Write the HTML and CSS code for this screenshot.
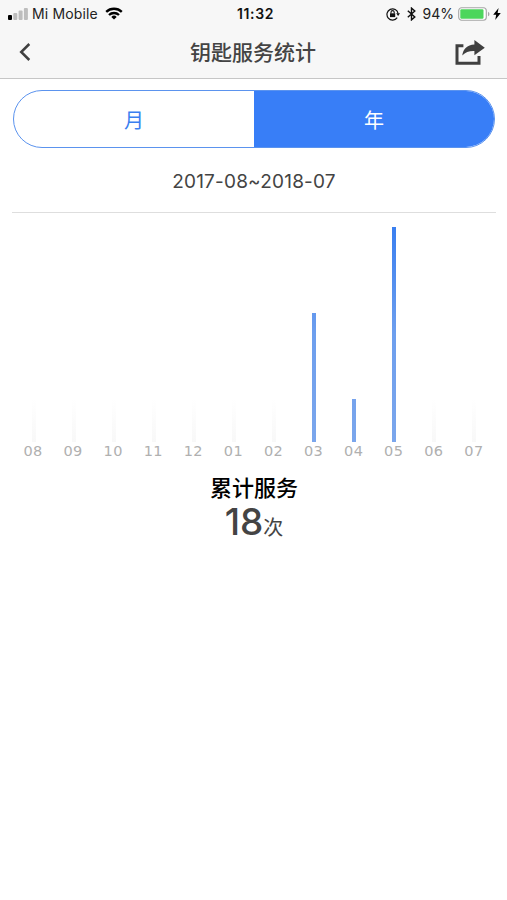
FILE: index.html
```
<!DOCTYPE html>
<html lang="zh-CN">
<head>
    <meta charset="UTF-8">
    <meta name="viewport" content="width=device-width, initial-scale=1.0">
    <title>钥匙服务统计</title>
    <link rel="stylesheet" href="styles.css">
</head>
<body>
    <header class="header">
        <div class="status">
            <div class="status-left">
                <svg class="signal" width="20" height="12" viewBox="0 0 20 12">
                    <rect x="0" y="7" width="4" height="5" rx="1" fill="#000"/>
                    <rect x="5.3" y="5" width="4" height="7" rx="1" fill="#bdbdbd"/>
                    <rect x="10.6" y="2.5" width="4" height="9.5" rx="1" fill="#bdbdbd"/>
                    <rect x="15.9" y="0" width="4" height="12" rx="1" fill="#bdbdbd"/>
                </svg>
                <span class="carrier">Mi Mobile</span>
                <svg class="wifi" width="18" height="13" viewBox="0 0 18 13" fill="none" stroke="#000" stroke-width="2.3">
                    <path d="M1.2 4.9a11.2 11.2 0 0 1 15.6 0"/>
                    <path d="M4 8a7.2 7.2 0 0 1 10 0"/>
                    <path d="M9 12.6L6.3 9.9a3.9 3.9 0 0 1 5.4 0z" fill="#000" stroke="none"/>
                </svg>
            </div>
            <span class="clock">11:32</span>
            <div class="status-right">
                <svg class="lock" width="14" height="14" viewBox="0 0 14 14" fill="none" stroke="#111">
                    <path d="M11.2 10.6A5.6 5.6 0 1 1 12.1 6.6" stroke-width="1.2"/>
                    <path d="M10.2 6.3h3.8l-1.9 2.6z" fill="#111" stroke="none"/>
                    <rect x="4" y="6.3" width="5.2" height="3.8" fill="#111" stroke="none"/>
                    <path d="M5 6.5V5.2a1.6 1.6 0 0 1 3.2 0v1.3" stroke-width="1.1"/>
                </svg>
                <svg class="bluetooth" width="9" height="14" viewBox="0 0 9 14" fill="none" stroke="#111" stroke-width="1.4">
                    <path d="M.8 3.8l7 6.3-3.3 2.8V1.1l3.3 2.8-7 6.3"/>
                </svg>
                <span class="percent">94%</span>
                <svg class="battery" width="33" height="14" viewBox="0 0 33 14">
                    <rect x=".7" y=".7" width="27.6" height="12.6" rx="3" fill="#fff" stroke="#a5a5a5" stroke-width="1.1"/>
                    <rect x="2.3" y="2.3" width="23.2" height="9.4" rx="1.2" fill="#4cd65c"/>
                    <path d="M30 4.7a2.5 2.5 0 0 1 0 4.6z" fill="#a5a5a5"/>
                </svg>
                <svg class="bolt" width="8" height="12" viewBox="0 0 8 12">
                    <path d="M5.6 0L.2 6.8h3L2.2 12 7.8 4.9H4.6z" fill="#000"/>
                </svg>
            </div>
        </div>
        <div class="navbar">
            <svg class="back" width="12" height="18" viewBox="0 0 12 18" fill="none" stroke="#404040" stroke-width="2.5">
                <path d="M10.3 1L2.2 9l8.1 8"/>
            </svg>
            <h1 class="title">钥匙服务统计</h1>
            <svg class="share" width="30" height="25" viewBox="0 0 30 25">
                <path d="M8.4 5.8H2v17.4h22V16" fill="none" stroke="#404040" stroke-width="3"/>
                <path d="M19.4 0l10.4 7.8-10.4 7.4v-4.3c-5.1-.2-8.8 1-12.2 4.7C8.2 8.8 12 4.7 19.4 4.4z" fill="#404040"/>
            </svg>
        </div>
    </header>

    <main class="content">
        <div class="tabs">
            <div class="tab">月</div>
            <div class="tab active">年</div>
        </div>
        <div class="range">2017-08~2018-07</div>

        <div class="chart">
            <div class="col"><div class="bar empty"></div><span>08</span></div>
            <div class="col"><div class="bar empty"></div><span>09</span></div>
            <div class="col"><div class="bar empty"></div><span>10</span></div>
            <div class="col"><div class="bar empty"></div><span>11</span></div>
            <div class="col"><div class="bar empty"></div><span>12</span></div>
            <div class="col"><div class="bar empty"></div><span>01</span></div>
            <div class="col"><div class="bar empty"></div><span>02</span></div>
            <div class="col"><div class="bar" style="height: 129px"></div><span>03</span></div>
            <div class="col"><div class="bar" style="height: 43px"></div><span>04</span></div>
            <div class="col"><div class="bar" style="height: 215px"></div><span>05</span></div>
            <div class="col"><div class="bar empty"></div><span>06</span></div>
            <div class="col"><div class="bar empty"></div><span>07</span></div>
        </div>

        <div class="total">
            <div class="total-label">累计服务</div>
            <div class="total-value">18<span class="unit">次</span></div>
        </div>
    </main>
</body>
</html>
```
FILE: styles.css
```
* {
    box-sizing: border-box;
}
body {
    margin: 0;
    min-height: 900px;
    background: #fff;
    color: #444;
    font-family: Inter, "Noto Sans CJK SC", sans-serif;
}
svg {
    display: block;
    flex: none;
}
.header {
    height: 79px;
    background: #f7f7f7;
    border-bottom: 1px solid #c6c6c6;
}

/* status bar */
.status {
    display: grid;
    grid-template-columns: 1fr auto 1fr;
    align-items: center;
    height: 27px;
    padding: 0 6px 0 8px;
    color: #111;
    font-size: 14px;
    line-height: 27px;
}
.status-left, .status-right {
    display: flex;
    align-items: center;
}
.status-right {
    justify-content: flex-end;
}
.carrier {
    margin: 0 7px 0 4px;
    color: #222;
    letter-spacing: 0.15px;
}
.clock {
    padding-left: 2px;
    font-weight: 600;
    letter-spacing: 0.6px;
}
.bluetooth {
    margin: 0 7px 0 7px;
}
.percent {
    margin-right: 4px;
    color: #222;
    font-size: 14px;
}
.bolt {
    margin-left: 2px;
}

/* title bar */
.navbar {
    display: flex;
    align-items: center;
    justify-content: space-between;
    height: 51px;
    padding: 0 22px 0 19px;
}
.back {
    margin-top: -1px;
}
.title {
    margin: 0 0 0 20px;
    font-size: 21px;
    font-weight: 500;
    line-height: 51px;
}

.content {
    padding: 11px 11px 0 12px;
}
.tabs {
    display: flex;
    height: 58px;
    margin: 0 1px;
    border: 1px solid #5b93ee;
    border-radius: 29px;
    overflow: hidden;
}
.tab {
    flex: 1;
    color: #3a7ff0;
    font-size: 20px;
    line-height: 60px;
    text-align: center;
}
.tab.active {
    background: #387ef7;
    color: #fff;
}
.range {
    height: 65px;
    border-bottom: 1px solid #dedede;
    font-size: 19px;
    letter-spacing: 0.2px;
    line-height: 67px;
    text-align: center;
}

/* bars share one gradient scale, measured from the baseline */
.chart {
    display: flex;
    align-items: flex-end;
    height: 248px;
    padding: 0 2px 0 1px;
}
.col {
    display: flex;
    flex: 1;
    flex-direction: column;
    align-items: center;
    color: #b0b0b0;
    font-family: "DejaVu Sans", sans-serif;
    font-size: 14.5px;
    letter-spacing: 0.4px;
    line-height: 19px;
}
.bar {
    width: 4px;
    margin-left: 1px;
    background: linear-gradient(#3a7ff0, #6e9fee 50%, #7ba6ec) bottom / 100% 215px no-repeat;
}
.bar.empty {
    height: 43px;
    background: linear-gradient(#fff, #f8f8f8);
}

.total {
    padding-top: 12px;
    text-align: center;
}
.total-label {
    color: #000;
    font-size: 22px;
    font-weight: 500;
    line-height: 30px;
}
.total-value {
    font-size: 37px;
    font-weight: 500;
    line-height: 38px;
}
.unit {
    font-size: 20px;
    font-weight: 400;
}
```
